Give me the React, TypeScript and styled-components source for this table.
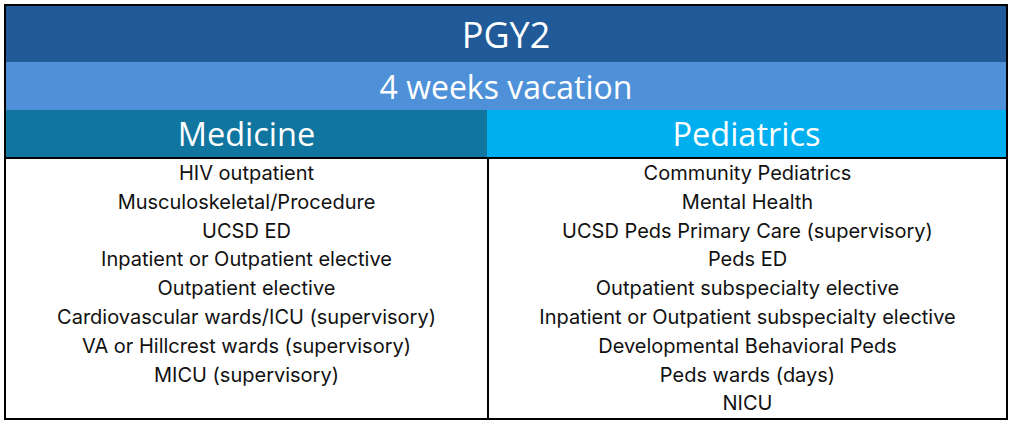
import React from "react";
import styled, { createGlobalStyle } from "styled-components";

const Global = createGlobalStyle`
  html, body { margin: 0; padding: 0; background: #ffffff; }
  body { width: 1010px; height: 421px; overflow: hidden; }
`;

const Page = styled.div`
  padding: 4px 0 0 4px;
`;

const Table = styled.div`
  width: 1000px;
  border: 2px solid #000;
  background: #fff;
`;

const Band = styled.div<{ $bg: string; $h: number; $size: number }>`
  height: ${(p) => p.$h}px;
  background: ${(p) => p.$bg};
  color: #fff;
  font-family: "Open Sans", Lato, sans-serif;
  font-size: ${(p) => p.$size}px;
  display: flex;
  align-items: center;
  justify-content: center;
`;

const HeadRow = styled.div`
  display: grid;
  grid-template-columns: 481px 519px;
  border-bottom: 2px solid #000;
`;

const Body = styled.div`
  display: grid;
  grid-template-columns: 481px 519px;
`;

const Col = styled.div<{ $divider?: boolean }>`
  display: flex;
  flex-direction: column;
  align-items: center;
  border-left: ${(p) => (p.$divider ? "2px solid #000" : "none")};
  font-family: Inter, "Liberation Sans", sans-serif;
  font-size: 20px;
  line-height: 28.8px;
  color: #111;
  min-height: 259px;
`;

const Line = styled.div`
  white-space: nowrap;
`;

const medicine = [
  "HIV outpatient",
  "Musculoskeletal/Procedure",
  "UCSD ED",
  "Inpatient or Outpatient elective",
  "Outpatient elective",
  "Cardiovascular wards/ICU (supervisory)",
  "VA or Hillcrest wards (supervisory)",
  "MICU (supervisory)",
];

const pediatrics = [
  "Community Pediatrics",
  "Mental Health",
  "UCSD Peds Primary Care (supervisory)",
  "Peds ED",
  "Outpatient subspecialty elective",
  "Inpatient or Outpatient subspecialty elective",
  "Developmental Behavioral Peds",
  "Peds wards (days)",
  "NICU",
];

export default function App() {
  return (
    <>
      <Global />
      <Page>
        <Table>
          <Band $bg="#215A98" $h={56} $size={36}>PGY2</Band>
          <Band $bg="#4F91D9" $h={48} $size={32}>4 weeks vacation</Band>
          <HeadRow>
            <Band $bg="#10769F" $h={47} $size={32.5}>Medicine</Band>
            <Band $bg="#00AFEF" $h={47} $size={32.5}>Pediatrics</Band>
          </HeadRow>
          <Body>
            <Col>
              {medicine.map((t) => (
                <Line key={t}>{t}</Line>
              ))}
            </Col>
            <Col $divider>
              {pediatrics.map((t) => (
                <Line key={t}>{t}</Line>
              ))}
            </Col>
          </Body>
        </Table>
      </Page>
    </>
  );
}
